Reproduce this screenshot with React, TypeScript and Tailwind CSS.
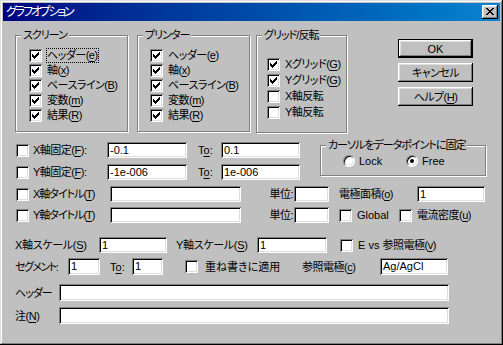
import React from "react";

const sunken =
  "bg-white shadow-[inset_1px_1px_#808080,inset_-1px_-1px_#ffffff,inset_2px_2px_#000000,inset_-2px_-2px_#dfdfdf]";
const raised =
  "bg-[#c0c0c0] shadow-[inset_-1px_-1px_#000000,inset_1px_1px_#ffffff,inset_-2px_-2px_#808080,inset_2px_2px_#dfdfdf]";

const CHECK: [number, number][] = [
  [6, 0], [5, 1], [6, 1], [0, 2], [4, 2], [5, 2], [6, 2],
  [0, 3], [1, 3], [3, 3], [4, 3], [5, 3],
  [0, 4], [1, 4], [2, 4], [3, 4], [4, 4],
  [1, 5], [2, 5], [3, 5], [2, 6],
];
const checkPath = CHECK.map(([x, y]) => `M${x + 3} ${y + 3}h1v1h-1z`).join("");

const XGLYPH: [number, number][] = [
  [0, 0], [1, 0], [6, 0], [7, 0],
  [1, 1], [2, 1], [5, 1], [6, 1],
  [2, 2], [3, 2], [4, 2], [5, 2],
  [3, 3], [4, 3],
  [2, 4], [3, 4], [4, 4], [5, 4],
  [1, 5], [2, 5], [5, 5], [6, 5],
  [0, 6], [1, 6], [6, 6], [7, 6],
];
const xPath = XGLYPH.map(([x, y]) => `M${x} ${y}h1v1h-1z`).join("");

function Cb({ checked = false, className = "" }: { checked?: boolean; className?: string }) {
  return (
    <span className={`flex w-[13px] h-[13px] shrink-0 ${sunken} ${className}`}>
      {checked && (
        <svg width="13" height="13" viewBox="0 0 13 13" shapeRendering="crispEdges">
          <path d={checkPath} fill="#000" />
        </svg>
      )}
    </span>
  );
}

function Radio({ checked = false }: { checked?: boolean }) {
  return (
    <span className="flex w-[12px] h-[12px] shrink-0 items-center justify-center rounded-full bg-white border border-t-[#808080] border-l-[#808080] border-r-white border-b-white shadow-[inset_1px_1px_#000000,inset_-1px_-1px_#dfdfdf]">
      {checked && <span className="block w-[4px] h-[4px] rounded-full bg-black" />}
    </span>
  );
}

function U({ children }: { children: React.ReactNode }) {
  return <span className="underline underline-offset-[2px] decoration-1">{children}</span>;
}

function Field({ className = "", value = "" }: { className?: string; value?: string }) {
  return (
    <div
      className={`${sunken} shrink-0 flex items-center pl-[3px] text-[11px] tracking-normal leading-none font-['Liberation_Sans',sans-serif] ${className}`}
    >
      {value}
    </div>
  );
}

function Group({
  label,
  className = "",
  labelClass = "",
  children,
}: {
  label: string;
  className?: string;
  labelClass?: string;
  children?: React.ReactNode;
}) {
  return (
    <div
      className={`relative shrink-0 border border-[#808080] shadow-[1px_1px_0_#ffffff,inset_1px_1px_0_#ffffff] ${className}`}
    >
      <span
        className={`absolute -top-[8px] left-[5px] bg-[#c0c0c0] px-[2px] leading-[14px] whitespace-nowrap ${labelClass}`}
      >
        {label}
      </span>
      {children}
    </div>
  );
}

function CbRow({
  checked,
  children,
  className = "",
  focus = false,
}: {
  checked?: boolean;
  children: React.ReactNode;
  className?: string;
  focus?: boolean;
}) {
  return (
    <div className={`flex items-center ${className}`}>
      <Cb checked={checked} />
      {focus ? (
        <span className="ml-[4px] leading-[13px] whitespace-nowrap border border-dotted border-black">
          {children}
        </span>
      ) : (
        <span className="ml-[5px] leading-[13px] whitespace-nowrap">{children}</span>
      )}
    </div>
  );
}

function Btn({ children, isDefault = false }: { children: React.ReactNode; isDefault?: boolean }) {
  if (isDefault) {
    return (
      <div className="w-[75px] h-[19px] border border-black flex">
        <div className={`flex-1 flex items-center justify-center ${raised}`}>{children}</div>
      </div>
    );
  }
  return <div className={`w-[75px] h-[19px] flex items-center justify-center ${raised}`}>{children}</div>;
}

export default function App() {
  return (
    <div className="w-[503px] h-[345px] bg-[#c0c0c0] p-[3px] flex flex-col text-black text-[11px] leading-[14px] tracking-[-0.5px] font-['Liberation_Sans','Noto_Sans_CJK_JP',sans-serif] [font-feature-settings:'palt'] shadow-[inset_-1px_-1px_#000000,inset_1px_1px_#dfdfdf,inset_-2px_-2px_#808080,inset_2px_2px_#ffffff] overflow-hidden">
      {/* title bar */}
      <div className="h-[18px] shrink-0 flex items-center bg-linear-to-r from-[#000080] to-[#1084d0] pl-[3px] pr-[2px]">
        <span className="text-white text-[12px] leading-none tracking-[-2.2px]">グラフオプション</span>
        <div className={`ml-auto w-[16px] h-[14px] flex items-center justify-center ${raised}`}>
          <svg width="8" height="7" viewBox="0 0 8 7" shapeRendering="crispEdges" className="-mt-[1px]">
            <path d={xPath} fill="#000" />
          </svg>
        </div>
      </div>

      {/* body */}
      <div className="flex-1 flex flex-col">
        {/* top section */}
        <div className="flex items-start mt-[14px] ml-[12px]">
          <Group label="スクリーン" className="w-[113px] h-[97px]" labelClass="tracking-[-1px]">
            <div className="flex flex-col pt-[12px] pl-[13px]">
              <CbRow checked className="h-[15px]" focus>
                ヘッダー(<U>e</U>)
              </CbRow>
              <CbRow checked className="h-[15px]">
                軸(<U>x</U>)
              </CbRow>
              <CbRow checked className="h-[15px]">
                ベースライン(<U>B</U>)
              </CbRow>
              <CbRow checked className="h-[15px]">
                変数(<U>m</U>)
              </CbRow>
              <CbRow checked className="h-[15px]">
                結果(<U>R</U>)
              </CbRow>
            </div>
          </Group>
          <Group label="プリンター" className="ml-[9px] w-[113px] h-[97px]" labelClass="tracking-[-1px]">
            <div className="flex flex-col pt-[12px] pl-[12px]">
              <CbRow checked className="h-[15px]">
                ヘッダー(<U>e</U>)
              </CbRow>
              <CbRow checked className="h-[15px]">
                軸(<U>x</U>)
              </CbRow>
              <CbRow checked className="h-[15px]">
                ベースライン(<U>B</U>)
              </CbRow>
              <CbRow checked className="h-[15px]">
                変数(<U>m</U>)
              </CbRow>
              <CbRow checked className="h-[15px]">
                結果(<U>R</U>)
              </CbRow>
            </div>
          </Group>
          <Group label="グリッド/反転" className="ml-[6px] w-[91px] h-[98px]" labelClass="tracking-[-1px]">
            <div className="flex flex-col pt-[20px] pl-[10px]">
              <CbRow checked className="h-[16px]">
                Xグリッド(<U>G</U>)
              </CbRow>
              <CbRow checked className="h-[16px]">
                Yグリッド(<U>G</U>)
              </CbRow>
              <CbRow className="h-[16px]">X軸反転</CbRow>
              <CbRow className="h-[16px]">Y軸反転</CbRow>
            </div>
          </Group>
          <div className="ml-[51px] mt-[4px] flex flex-col gap-[5px]">
            <Btn isDefault>
              <span className="tracking-normal">OK</span>
            </Btn>
            <Btn>キャンセル</Btn>
            <Btn>
              ヘルプ(<U>H</U>)
            </Btn>
          </div>
        </div>

        {/* rows A/B + cursor group */}
        <div className="flex items-start mt-[9px]">
          <div className="flex flex-col ml-[13px]">
            <div className="flex items-center h-[16px]">
              <Cb />
              <span className="ml-[4px] w-[74px] whitespace-nowrap">
                X軸固定(<U>F</U>):
              </span>
              <Field className="w-[80px] h-[16px]" value="-0.1" />
              <span className="ml-[11px] w-[23px] tracking-normal">
                T<U>o</U>:
              </span>
              <Field className="w-[79px] h-[16px]" value="0.1" />
            </div>
            <div className="flex items-center h-[16px] mt-[6px]">
              <Cb />
              <span className="ml-[4px] w-[74px] whitespace-nowrap">
                Y軸固定(<U>F</U>):
              </span>
              <Field className="w-[80px] h-[16px]" value="-1e-006" />
              <span className="ml-[11px] w-[23px] tracking-normal">
                T<U>o</U>:
              </span>
              <Field className="w-[79px] h-[16px]" value="1e-006" />
            </div>
          </div>
          <Group
            label="カーソルをデータポイントに固定"
            className="ml-[20px] mt-[3px] w-[166px] h-[31px]"
            labelClass="tracking-[-1px]"
          >
            <div className="flex items-center pt-[9px] pl-[22px] tracking-normal">
              <div className="flex items-center w-[63px]">
                <Radio />
                <span className="ml-[4px] leading-[12px]">Lock</span>
              </div>
              <div className="flex items-center">
                <Radio checked />
                <span className="ml-[4px] leading-[12px]">Free</span>
              </div>
            </div>
          </Group>
        </div>

        {/* Row C */}
        <div className="flex items-center h-[16px] mt-[6px] ml-[13px]">
          <Cb />
          <span className="ml-[4px] w-[77px] whitespace-nowrap tracking-[-1px]">
            X軸タイトル(<U>T</U>)
          </span>
          <Field className="w-[131px] h-[16px]" />
          <span className="w-[53px] text-right pr-[1px] whitespace-nowrap">単位:</span>
          <Field className="w-[35px] h-[16px]" />
          <span className="ml-[10px] w-[78px] whitespace-nowrap">
            電極面積(<U>o</U>)
          </span>
          <Field className="w-[68px] h-[16px]" value="1" />
        </div>

        {/* Row D */}
        <div className="flex items-center h-[16px] mt-[5px] ml-[13px]">
          <Cb />
          <span className="ml-[4px] w-[77px] whitespace-nowrap tracking-[-1px]">
            Y軸タイトル(<U>T</U>)
          </span>
          <Field className="w-[131px] h-[16px]" />
          <span className="w-[53px] text-right pr-[1px] whitespace-nowrap">単位:</span>
          <Field className="w-[35px] h-[16px]" />
          <Cb className="ml-[10px]" />
          <span className="pl-[5px] w-[47px] tracking-normal">Global</span>
          <Cb />
          <span className="pl-[5px] whitespace-nowrap">
            電流密度(<U>u</U>)
          </span>
        </div>

        {/* Row E */}
        <div className="flex items-center h-[16px] mt-[14px] ml-[12px]">
          <span className="w-[84px] whitespace-nowrap tracking-[-0.3px]">
            X軸スケール(<U>S</U>)
          </span>
          <Field className="w-[68px] h-[16px]" value="1" />
          <span className="ml-[9px] w-[81px] whitespace-nowrap tracking-[-0.3px]">
            Y軸スケール(<U>S</U>)
          </span>
          <Field className="w-[70px] h-[16px]" value="1" />
          <Cb className="ml-[13px]" />
          <span className="pl-[5px] whitespace-nowrap">
            <span className="tracking-normal">E vs </span>参照電極(<U>v</U>)
          </span>
        </div>

        {/* Row F */}
        <div className="flex items-center h-[17px] mt-[5px] ml-[12px]">
          <span className="w-[53px] whitespace-nowrap tracking-[-1.5px]">セグメント:</span>
          <Field className="w-[32px] h-[17px]" value="1" />
          <span className="ml-[10px] w-[22px] tracking-normal">
            T<U>o</U>:
          </span>
          <Field className="w-[31px] h-[17px]" value="1" />
          <Cb className="ml-[22px]" />
          <span className="pl-[7px] w-[104px] whitespace-nowrap tracking-normal">重ね書きに適用</span>
          <span className="w-[78px] whitespace-nowrap">
            参照電極(<U>c</U>)
          </span>
          <Field className="w-[68px] h-[17px]" value="Ag/AgCl" />
        </div>

        {/* Row G */}
        <div className="flex items-center h-[17px] mt-[9px] ml-[12px]">
          <span className="w-[44px] whitespace-nowrap tracking-[-1px]">ヘッダー</span>
          <Field className="w-[390px] h-[17px]" />
        </div>

        {/* Row H */}
        <div className="flex items-center h-[17px] mt-[6px] ml-[12px]">
          <span className="w-[44px] whitespace-nowrap">
            注(<U>N</U>)
          </span>
          <Field className="w-[390px] h-[17px]" />
        </div>
      </div>
    </div>
  );
}
